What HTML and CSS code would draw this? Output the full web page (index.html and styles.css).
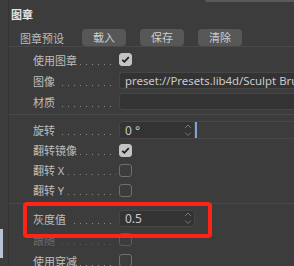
FILE: index.html
```html
<!DOCTYPE html>
<html lang="zh">
<head>
<meta charset="utf-8">
<link rel="stylesheet" href="styles.css">
</head>
<body>
<div class="gutter"><div class="gutter-mark"></div></div>
<div class="panel">
  <div class="stub"></div>
  <div class="hdr">图章</div>
  <div class="preset">
    <span class="preset-label">图章预设</span>
    <div class="btns">
      <button class="btn">载入</button>
      <button class="btn">保存</button>
      <button class="btn">清除</button>
    </div>
  </div>
  <div class="sep"></div>
  <div class="group g1">
    <div class="row"><span class="lbl">使用图章<i class="dots"></i></span><span class="cb on"><svg width="13" height="13" viewBox="0 0 13 13"><path d="M3.3 6.8 L5.4 8.9 L9.8 4.2" fill="none" stroke="#1c1c1c" stroke-width="1.7"/></svg></span></div>
    <div class="row"><span class="lbl">图像<i class="dots"></i></span><div class="field wide path">preset://Presets.lib4d/Sculpt Brushes/Stamps/Grunge</div></div>
    <div class="row"><span class="lbl">材质<i class="dots"></i></span><div class="field wide"></div></div>
  </div>
  <div class="sep"></div>
  <div class="group g2">
    <div class="row"><span class="lbl">旋转<i class="dots"></i></span>
      <div class="combo">
        <div class="field num">0 °<svg class="spin" width="8" height="13" viewBox="0 0 8 13"><path d="M1 4 L4 1 L7 4 M1 8.5 L4 11.5 L7 8.5" fill="none" stroke="#777" stroke-width="1"/></svg></div>
        <div class="track"><span class="knob"></span></div>
      </div>
    </div>
    <div class="row"><span class="lbl">翻转镜像<i class="dots"></i></span><span class="cb on"><svg width="13" height="13" viewBox="0 0 13 13"><path d="M3.3 6.8 L5.4 8.9 L9.8 4.2" fill="none" stroke="#1c1c1c" stroke-width="1.7"/></svg></span></div>
    <div class="row"><span class="lbl">翻转 X<i class="dots"></i></span><span class="cb"></span></div>
    <div class="row"><span class="lbl">翻转 Y<i class="dots"></i></span><span class="cb"></span></div>
  </div>
  <div class="sep"></div>
  <div class="group g3">
    <div class="row"><span class="lbl">灰度值<i class="dots"></i></span><div class="field num">0.5<svg class="spin" width="8" height="13" viewBox="0 0 8 13"><path d="M1 4 L4 1 L7 4 M1 8.5 L4 11.5 L7 8.5" fill="none" stroke="#777" stroke-width="1"/></svg></div></div>
    <div class="row off"><span class="lbl">跟随<i class="dots"></i></span><span class="cb"></span></div>
    <div class="row"><span class="lbl">使用穿减<i class="dots"></i></span><span class="cb"></span></div>
  </div>
</div>
<div class="highlight"></div>
</body>
</html>
```

FILE: styles.css
```css
html, body {
  margin: 0;
  padding: 0;
}
body {
  width: 294px;
  height: 266px;
  overflow: hidden;
  background: #3c3c3c;
  display: flex;
  position: relative;
  font-family: "Noto Sans", "Noto Sans CJK SC", sans-serif;
  font-size: 11px;
  color: #bebebe;
}
.gutter {
  width: 8px;
  flex: none;
}
.gutter-mark {
  margin-top: 229px;
  width: 3px;
  height: 29px;
  background: #b9c3d6;
}
.panel {
  flex: 1;
  min-width: 0;
  border-left: 1px solid #343434;
}
.stub {
  height: 2px;
  margin-left: 196px;
  background: #5a5a5a;
  border-bottom-left-radius: 3px;
}
.hdr {
  margin-top: 6px;
  height: 14px;
  line-height: 14px;
  padding-left: 2px;
  font-weight: bold;
  color: #e4e4e4;
}
.preset {
  margin-top: 7px;
  height: 17px;
  display: flex;
  align-items: center;
  padding-left: 11px;
}
.preset-label {
  width: 62px;
  flex: none;
  color: #bdbdbd;
}
.btns {
  display: flex;
  gap: 14px;
}
.btn {
  width: 44px;
  height: 17px;
  padding: 0;
  border: none;
  border-radius: 4px;
  background: #575757;
  color: #cdcdcd;
  font: inherit;
  line-height: 17px;
}
.sep {
  height: 1px;
  background: #4a4a4a;
}
.g1 { margin-top: 2px; margin-bottom: 2px; }
.g2 { margin-top: 5px; margin-bottom: 3px; }
.g3 { margin-top: 4px; }
.row {
  height: 21px;
  display: flex;
  align-items: center;
  padding-left: 24px;
}
.g2 .row { height: 20px; }
.lbl {
  width: 86px;
  flex: none;
  display: flex;
  align-items: center;
  height: 100%;
  padding-right: 3px;
  box-sizing: border-box;
  white-space: nowrap;
}
.dots {
  flex: 1;
  height: 1px;
  margin-top: 9px;
  margin-left: 3px;
  background-image: linear-gradient(to right, #8a8a8a 1px, transparent 1px);
  background-size: 6px 1px;
  background-position: right 0 top 0;
  background-repeat: repeat-x;
}
.cb {
  width: 13px;
  height: 13px;
  box-sizing: border-box;
  border: 1px solid #6f6f6f;
  border-radius: 3px;
  display: block;
}
.cb svg { display: block; margin: -1px; }
.cb.on {
  background: #c4c4c4;
  border-color: #c4c4c4;
}
.field {
  height: 17px;
  box-sizing: border-box;
  background: #333333;
  border: 1px solid #464646;
  border-radius: 3px;
  padding-left: 5px;
  line-height: 15px;
  color: #c8c8c8;
  white-space: nowrap;
  overflow: hidden;
  font-size: 12px;
}
.field.path {
  font-size: 11.4px;
  color: #cacaca;
}
.field.wide {
  flex: 1;
  margin-right: -6px;
  border-right: none;
}
.field.num {
  width: 76px;
  flex: none;
  display: flex;
  align-items: center;
  justify-content: space-between;
  padding-right: 2px;
}
.spin { flex: none; }
.combo {
  flex: 1;
  display: flex;
  height: 18px;
  margin-right: -6px;
}
.combo .field.num {
  height: 18px;
  border-radius: 3px 0 0 3px;
}
.track {
  flex: 1;
  border-top: 1px solid #474747;
  border-bottom: 1px solid #474747;
  display: flex;
}
.knob {
  width: 2px;
  background: #7ea2d8;
}
.row.off { color: #6c6c6c; }
.row.off .dots { background-image: linear-gradient(to right, #5c5c5c 1px, transparent 1px); }
.row.off .cb { border-color: #5a5a5a; }
.highlight {
  position: absolute;
  left: 23px;
  top: 202px;
  width: 189px;
  height: 36px;
  box-sizing: border-box;
  border: 4px solid #ff2318;
  border-radius: 4px;
}
```
